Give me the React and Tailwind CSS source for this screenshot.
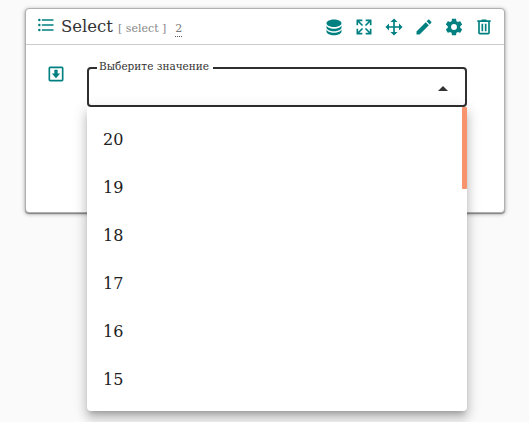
const icons = {
  list: 'M7,5H21V7H7V5M7,13V11H21V13H7M4,4.5A1.5,1.5 0 0,1 5.5,6A1.5,1.5 0 0,1 4,7.5A1.5,1.5 0 0,1 2.5,6A1.5,1.5 0 0,1 4,4.5M4,10.5A1.5,1.5 0 0,1 5.5,12A1.5,1.5 0 0,1 4,13.5A1.5,1.5 0 0,1 2.5,12A1.5,1.5 0 0,1 4,10.5M7,19V17H21V19H7M4,16.5A1.5,1.5 0 0,1 5.5,18A1.5,1.5 0 0,1 4,19.5A1.5,1.5 0 0,1 2.5,18A1.5,1.5 0 0,1 4,16.5Z',
  database: 'M21 9.5V12.5C21 14.985 16.97 17 12 17C7.03 17 3 14.985 3 12.5V9.5C3 11.985 7.03 14 12 14C16.97 14 21 11.985 21 9.5ZM3 14.5C3 16.985 7.03 19 12 19C16.97 19 21 16.985 21 14.5V17.5C21 19.985 16.97 22 12 22C7.03 22 3 19.985 3 17.5V14.5ZM12 12C7.03 12 3 9.985 3 7.5C3 5.015 7.03 3 12 3C16.97 3 21 5.015 21 7.5C21 9.985 16.97 12 12 12Z',
  expand: 'M9.5,13.09L10.91,14.5L6.41,19H10V21H3V14H5V17.59L9.5,13.09M10.91,9.5L9.5,10.91L5,6.41V10H3V3H10V5H6.41L10.91,9.5M14.5,13.09L19,17.59V14H21V21H14V19H17.59L13.09,14.5L14.5,13.09M13.09,9.5L17.59,5H14V3H21V10H19V6.41L14.5,10.91L13.09,9.5Z',
  move: 'M13,6V11H18V7.75L22.25,12L18,16.25V13H13V18H16.25L12,22.25L7.75,18H11V13H6V16.25L1.75,12L6,7.75V11H11V6H7.75L12,1.75L16.25,6H13Z',
  pencil: 'M20.71,7.04C21.1,6.65 21.1,6 20.71,5.63L18.37,3.29C18,2.9 17.35,2.9 16.96,3.29L15.12,5.12L18.87,8.87M3,17.25V21H6.75L17.81,9.93L14.06,6.18L3,17.25Z',
  cog: 'M12,15.5A3.5,3.5 0 0,1 8.5,12A3.5,3.5 0 0,1 12,8.5A3.5,3.5 0 0,1 15.5,12A3.5,3.5 0 0,1 12,15.5M19.43,12.97C19.47,12.65 19.5,12.33 19.5,12C19.5,11.67 19.47,11.34 19.43,11L21.54,9.37C21.73,9.22 21.78,8.95 21.66,8.73L19.66,5.27C19.54,5.05 19.27,4.96 19.05,5.05L16.56,6.05C16.04,5.66 15.5,5.32 14.87,5.07L14.5,2.42C14.46,2.18 14.25,2 14,2H10C9.75,2 9.54,2.18 9.5,2.42L9.13,5.07C8.5,5.32 7.96,5.66 7.44,6.05L4.95,5.05C4.73,4.96 4.46,5.05 4.34,5.27L2.34,8.73C2.21,8.95 2.27,9.22 2.46,9.37L4.57,11C4.53,11.34 4.5,11.67 4.5,12C4.5,12.33 4.53,12.65 4.57,12.97L2.46,14.63C2.27,14.78 2.21,15.05 2.34,15.27L4.34,18.73C4.46,18.95 4.73,19.03 4.95,18.95L7.44,17.94C7.96,18.34 8.5,18.68 9.13,18.93L9.5,21.58C9.54,21.82 9.75,22 10,22H14C14.25,22 14.46,21.82 14.5,21.58L14.87,18.93C15.5,18.67 16.04,18.34 16.56,17.94L19.05,18.95C19.27,19.03 19.54,18.95 19.66,18.73L21.66,15.27C21.78,15.05 21.73,14.78 21.54,14.63L19.43,12.97Z',
  trash: 'M9,3V4H4V6H5V19A2,2 0 0,0 7,21H17A2,2 0 0,0 19,19V6H20V4H15V3H9M7,6H17V19H7V6M9,8V17H11V8H9M13,8V17H15V8H13Z',
  inbox: 'M5,3H19A2,2 0 0,1 21,5V19A2,2 0 0,1 19,21H5A2,2 0 0,1 3,19V5A2,2 0 0,1 5,3M5,5V19H19V5H5M10,7H14V11.5H17L12,17L7,11.5H10V7Z',
};

function Icon({ name, className = 'size-5' }) {
  return (
    <svg viewBox="0 0 24 24" fill="currentColor" fillRule="evenodd" className={`shrink-0 text-[#008080] ${className}`}>
      <path d={icons[name]} />
    </svg>
  );
}

const actions = ['database', 'expand', 'move', 'pencil', 'cog', 'trash'];
const options = [20, 19, 18, 17, 16, 15];

function Menu() {
  return (
    <ul className="absolute top-full left-0 h-[304px] w-full rounded-b-[4px] bg-white pt-[9px] shadow-[0_5px_5px_-3px_rgba(0,0,0,0.2),0_8px_10px_1px_rgba(0,0,0,0.14),0_3px_14px_2px_rgba(0,0,0,0.12)]">
      {options.map((n) => (
        <li key={n} className="flex h-12 items-center px-4 text-base text-[#212121]">{n}</li>
      ))}
      <li aria-hidden="true" className="absolute top-0 right-0 h-[82px] w-[5px] rounded-[1px] bg-[#f8946d]" />
    </ul>
  );
}

function Select() {
  return (
    <div className="relative h-10 w-[380px]">
      <fieldset className="h-full rounded-[4px] border-2 border-[#2f2f2f]" />
      <span className="absolute -top-2 left-[10px] h-[14px] w-[116px] bg-white pl-[2px] text-[10.5px] leading-[14px] whitespace-nowrap text-[#333]">
        Выберите значение
      </span>
      <svg viewBox="0 0 10 5" className="absolute top-[19px] right-[19px] h-[5px] w-[10px] fill-[#333]">
        <path d="M0 5 5 0l5 5z" />
      </svg>
      <Menu />
    </div>
  );
}

export default function App() {
  return (
    <div className="h-[422px] overflow-hidden bg-[#fafafa] pt-2 pl-[25px] font-['DejaVu_Serif',serif]">
      <section className="h-[205px] w-[480px] rounded-[4px] border border-[#b0b0b0] bg-white shadow-[0_1px_4px_rgba(0,0,0,0.35),0_1px_1px_rgba(0,0,0,0.35)]">
        <header className="flex h-9 items-center border-b border-[#ccc] pr-[10px] pl-[10px]">
          <Icon name="list" className="mb-[3px] size-5" />
          <h1 className="ml-[5px] w-[52px] text-[16.5px] leading-6 text-[#333]">Select</h1>
          <span className="mt-[5px] ml-[5px] text-[11px] text-[#888]">[ select ]</span>
          <span className="mt-[6px] ml-[9px] border-b border-dotted border-[#555] text-[11px] leading-[14px] text-[#777]">2</span>
          <div className="ml-auto flex gap-[10px]">
            {actions.map((name) => <Icon key={name} name={name} />)}
          </div>
        </header>
        <div className="flex pt-[22px] pl-5">
          <Icon name="inbox" className="-mt-[3px] mr-[21px] size-5" />
          <Select />
        </div>
      </section>
    </div>
  );
}
